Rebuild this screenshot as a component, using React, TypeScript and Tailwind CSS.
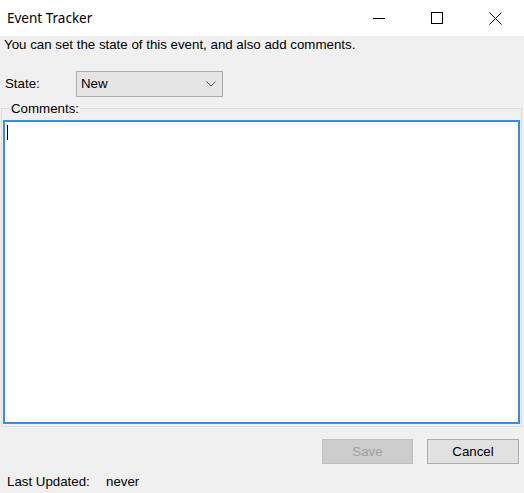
import React from 'react';

function TitleButtons() {
  return (
    <div className="flex h-full items-stretch">
      <div className="flex w-[46px] items-center justify-center">
        <svg width="12" height="12" viewBox="0 0 12 12">
          <path d="M0 6.5H12" stroke="#000" strokeWidth="1" />
        </svg>
      </div>
      <div className="ml-[12px] flex w-[46px] items-center justify-center">
        <svg width="12" height="12" viewBox="0 0 12 12">
          <rect x="0.5" y="0.5" width="11" height="11" fill="none" stroke="#000" strokeWidth="1" />
        </svg>
      </div>
      <div className="ml-[12px] flex w-[46px] items-center justify-center">
        <svg width="13" height="13" viewBox="0 0 13 13">
          <path d="M0.5 0.5L12.5 12.5M12.5 0.5L0.5 12.5" stroke="#000" strokeWidth="1" />
        </svg>
      </div>
    </div>
  );
}

export default function App() {
  return (
    <div
      className="flex h-[493px] w-[524px] flex-col overflow-hidden bg-[#f0f0f0] text-[13.3px] text-black"
      style={{ fontFamily: '"Liberation Sans", Arial, sans-serif' }}
    >
      {/* title bar */}
      <div className="flex h-[36px] shrink-0 items-center justify-between bg-white pl-[7px] pr-[6px]">
        <span className="text-[13.5px] text-black" style={{ fontFamily: '"Noto Sans", "Liberation Sans", sans-serif' }}>
          Event Tracker
        </span>
        <TitleButtons />
      </div>

      <div className="pl-[4px] pt-[1px] leading-[16px]">You can set the state of this event, and also add comments.</div>

      <div className="mt-[18px] flex items-center">
        <span className="w-[76px] pl-[5px]">State:</span>
        <div className="flex h-[26px] w-[147px] items-center justify-between border border-[#acacac] bg-[#e5e5e5] pl-[4px] pr-[6px]">
          <span>New</span>
          <svg width="10" height="6" viewBox="0 0 10 6">
            <path d="M0.5 0.5L5 5L9.5 0.5" fill="none" stroke="#555" strokeWidth="1" />
          </svg>
        </div>
      </div>

      {/* group box */}
      <div className="relative ml-[1px] mr-[2px] mt-[11px] h-[319px] border border-[#dcdcdc] px-[1px] pb-[2px] pt-[11px]">
        <span className="absolute left-[8px] top-[-8px] bg-[#f0f0f0] px-[1px] leading-[15px]">Comments:</span>
        <div className="relative h-full border-2 border-[#3a8ee0] bg-white">
          <div className="absolute left-[2px] top-[3px] h-[15px] w-[1px] bg-black" />
        </div>
      </div>

      <div className="mt-[12px] flex justify-end gap-[14px] pr-[5px]">
        <div className="flex h-[25px] w-[91px] items-center justify-center border border-[#bfbfbf] bg-[#cccccc] text-[#a0a0a0]">
          Save
        </div>
        <div className="flex h-[25px] w-[92px] items-center justify-center border border-[#adadad] bg-[#e1e1e1]">
          Cancel
        </div>
      </div>

      <div className="mt-auto mb-[1px] flex pl-[7px]">
        <span className="w-[99px]">Last Updated:</span>
        <span>never</span>
      </div>
    </div>
  );
}
